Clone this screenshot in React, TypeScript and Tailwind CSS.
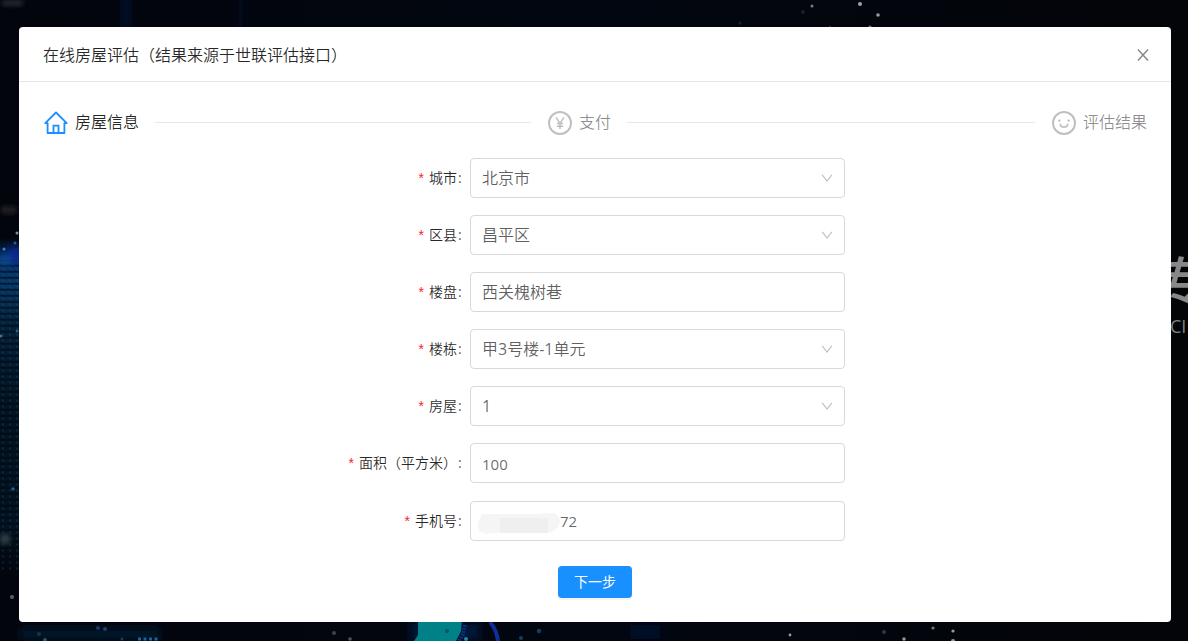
import React from 'react';

type Field = {
  label: string;
  value: string;
  select?: boolean;
  masked?: boolean;
};

const fields: Field[] = [
  { label: '城市', value: '北京市', select: true },
  { label: '区县', value: '昌平区', select: true },
  { label: '楼盘', value: '西关槐树巷' },
  { label: '楼栋', value: '甲3号楼-1单元', select: true },
  { label: '房屋', value: '1', select: true },
  { label: '面积（平方米）', value: '100' },
  { label: '手机号', value: '72', masked: true },
];

const stars: [number, number, number, string][] = [
  [812, 6, 1.5, '#777b80'],
  [860, 4, 2, '#a0a2a6'],
  [878, 15, 1.8, '#96999d'],
  [830, 28, 1.6, '#999'],
  [870, 27, 1.6, '#777'],
  [803, 12, 2, '#15212b'],
  [740, 23, 1.5, '#18222e'],
  [790, 635, 1.4, '#999'],
  [884, 632, 2, '#33363a'],
  [904, 639, 1.7, '#999'],
  [933, 628, 1.6, '#777'],
  [953, 631, 1.6, '#999'],
  [953, 641, 2, '#999'],
  [334, 633, 2, '#3d444c'],
  [350, 639, 1.8, '#4c5359'],
  [521, 638, 2, '#0e4459'],
  [539, 631, 2.2, '#12405e'],
  [17, 233, 1.5, '#7190a8'],
  [15, 243, 1.5, '#355a91'],
  [4, 249, 1.5, '#4c80ae'],
  [17, 331, 1.5, '#25618d'],
  [1, 336, 1.5, '#4c6f8c'],
  [13, 489, 1.8, '#15648a'],
  [12, 597, 2, '#50636b'],
  [45, 640, 2, '#2f5265'],
  [39, 634, 2, '#1c3343'],
  [98, 628, 2, '#17386d'],
  [105, 629, 2, '#26415e'],
  [122, 639, 1.5, '#1b4156'],
];

function Backdrop() {
  return (
    <svg className="absolute inset-0" width="1188" height="641" aria-hidden="true">
      <defs>
        <linearGradient id="sky" x1="0" x2="1" y1="0" y2="0">
          <stop offset="0" stopColor="#02050c" />
          <stop offset="0.5" stopColor="#020610" />
          <stop offset="1" stopColor="#030508" />
        </linearGradient>
        <linearGradient id="glow" x1="0" x2="0" y1="0" y2="1">
          <stop offset="0" stopColor="#02050c" />
          <stop offset="0.06" stopColor="#06326b" />
          <stop offset="0.13" stopColor="#063969" />
          <stop offset="0.25" stopColor="#03223c" />
          <stop offset="0.5" stopColor="#021423" />
          <stop offset="0.85" stopColor="#021221" />
          <stop offset="1" stopColor="#02050c" />
        </linearGradient>
        <pattern id="scan" width="7" height="6" patternUnits="userSpaceOnUse">
          <path d="M0 1.5 L7 2" stroke="#01060d" strokeWidth="2" opacity="0.6" />
          <circle cx="3" cy="4.5" r="1" fill="#155079" opacity="0.4" />
        </pattern>
        <filter id="soft" x="-50%" y="-50%" width="200%" height="200%">
          <feGaussianBlur stdDeviation="0.7" />
        </filter>
        <filter id="blot" x="-50%" y="-100%" width="200%" height="300%">
          <feGaussianBlur stdDeviation="2" />
        </filter>
        <filter id="wide" filterUnits="userSpaceOnUse" x="-40" y="-40" width="1260" height="720">
          <feGaussianBlur stdDeviation="4" />
        </filter>
      </defs>
      <rect width="1188" height="641" fill="url(#sky)" />
      <rect y="238" width="19" height="340" fill="url(#glow)" />
      <rect y="260" width="19" height="310" fill="url(#scan)" />
      <circle cx="15" cy="255" r="8" fill="#0a2897" filter="url(#wide)" />
      <circle cx="5" cy="260" r="6" fill="#0b56a3" filter="url(#wide)" opacity="0.8" />
      <g filter="url(#wide)">
        <rect x="124" y="-5" width="4" height="34" fill="#0b1c48" />
        <rect x="239" y="-5" width="3" height="34" fill="#071531" />
        <rect x="20" y="628" width="140" height="12" fill="#03162a" />
        <rect x="630" y="625" width="30" height="14" fill="#020c2c" />
        <rect x="410" y="622" width="70" height="19" fill="#041537" />
      </g>
      <rect x="2" y="0" width="21" height="6" fill="#24272d" filter="url(#blot)" />
      <rect x="0" y="534" width="10" height="10" fill="#2c3a42" filter="url(#blot)" />
      <rect x="1" y="206" width="15" height="8" fill="#1a1c22" filter="url(#blot)" />
      <g filter="url(#soft)">
        <path d="M418 620 L462 620 L461 631 L456 641 L414 641 L418 635 Z" fill="#048087" />
        <path d="M465 625 L463 634 L459 641" stroke="#0b2f75" strokeWidth="4" strokeDasharray="2 1" fill="none" />
        <path d="M490 622 Q497 630 498 642" stroke="#102f9b" strokeWidth="4" fill="none" />
        <path d="M138 639 H158" stroke="#1c61a5" strokeWidth="3" strokeDasharray="3 2.5" />
        <circle cx="447" cy="631" r="2" fill="#07516a" />
        <circle cx="466" cy="639" r="2" fill="#2487a5" />
        {stars.map(([cx, cy, r, fill], i) => (
          <circle key={i} cx={cx} cy={cy} r={r} fill={fill} />
        ))}
      </g>
    </svg>
  );
}

function HomeIcon() {
  return (
    <svg className="mt-0.5 size-6 shrink-0" viewBox="0 0 24 24" fill="none" stroke="#1890ff" strokeWidth="1.8">
      <path d="M3.6 12.2H1.3L12 1.5L22.7 12.2H20.4V22H3.6Z" strokeLinejoin="round" />
      <path d="M9.5 22V14.6H14.5V22" />
    </svg>
  );
}

function PayIcon() {
  return (
    <svg className="mt-0.5 size-6 shrink-0" viewBox="0 0 24 24" fill="none" stroke="#bfbfbf">
      <circle cx="12" cy="12" r="11" strokeWidth="2" />
      <path d="M8.1 6.3L12 12.3L15.9 6.3M12 12.3V18M8.9 12.6H15.1M8.9 15.2H15.1" strokeWidth="1.5" />
    </svg>
  );
}

function SmileIcon() {
  return (
    <svg className="mt-0.5 size-6 shrink-0" viewBox="0 0 24 24" fill="none" stroke="#bfbfbf">
      <circle cx="12" cy="12" r="11" strokeWidth="2" />
      <path d="M8.2 12.6C8.4 17.2 15.6 17.2 15.8 12.6" strokeWidth="1.6" />
      <circle cx="7.3" cy="9.6" r="1.2" fill="#bfbfbf" stroke="none" />
      <circle cx="16.7" cy="9.6" r="1.2" fill="#bfbfbf" stroke="none" />
    </svg>
  );
}

function DownIcon() {
  return (
    <svg className="h-3 w-3 shrink-0" viewBox="0 0 12 12" fill="none" stroke="#bfbfbf" strokeWidth="1.1">
      <path d="M1.2 2.8L6 9L10.8 2.8" />
    </svg>
  );
}

function Value({ text }: { text: string }) {
  return (
    <span>
      {text.split(/([-\d]+)/).map((part, i) =>
        i % 2 ? (
          <span key={i} className="font-normal text-black/60">{part}</span>
        ) : (
          part
        ),
      )}
    </span>
  );
}

function FieldRow({ field }: { field: Field }) {
  return (
    <div className="flex h-10 items-center">
      <div className="flex w-[443px] shrink-0 items-center justify-end text-sm font-[350] text-black/85">
        <span className="mr-[5px] font-['Liberation_Sans'] font-normal text-[#f5222d]">*</span>
        <span>{field.label}</span>
        <span className="w-[5px] pl-px font-['Open_Sans'] font-normal text-black/70">:</span>
      </div>
      <div className="ml-2 flex h-10 w-[375px] items-center justify-between rounded border border-[#d9d9d9] pr-[11px] pl-[11px] text-base font-[350] text-black/65">
        {field.masked ? (
          <span className="flex items-center text-[15px]">
            <svg className="-ml-1 mt-[5px] h-[22px] w-[82px]" viewBox="0 0 82 22">
              <path d="M4 2H60L68 1H76Q82 4 82 11Q78 20 70 21H14L8 22L1 19Q-1 14 1 8Z" fill="#f5f5f5" />
              <path d="M22 6H70V21H22Z" fill="#efefef" />
            </svg>
            <span className="pt-px"><Value text={field.value} /></span>
          </span>
        ) : (
          <span className={field.value === '100' ? 'pt-0.5 text-[15px]' : ''}>
            <Value text={field.value} />
          </span>
        )}
        {field.select && <DownIcon />}
      </div>
    </div>
  );
}

export default function App() {
  return (
    <div className="relative h-[641px] w-[1188px] overflow-hidden bg-[#02050c] px-[19px] pt-[27px] font-['Open_Sans','Noto_Sans_CJK_SC',sans-serif]">
      <Backdrop />
      <span className="absolute top-[244px] left-[1157px] font-['Noto_Sans_CJK_SC',sans-serif] text-[53px] leading-[70px] font-medium text-[#888]">专</span>
      <span className="absolute top-[314px] left-[1170px] text-[18px] leading-6 text-[#808080]">CI</span>
      <main className="relative h-[595px] w-[1152px] rounded bg-white">
        <header className="flex h-[55px] items-center justify-between border-b border-[#e8e8e8] pr-[22px] pl-6">
          <h1 className="font-['Noto_Sans_CJK_SC',sans-serif] text-base font-[350] text-black/85">
            在线房屋评估（结果来源于世联评估接口）
          </h1>
          <button aria-label="关闭">
            <svg className="mt-px size-3" viewBox="0 0 12 12" fill="none" stroke="#858585" strokeWidth="1.4">
              <path d="M1 0.5L11 11.5M11 0.5L1 11.5" />
            </svg>
          </button>
        </header>
        <div className="flex h-20 items-center pr-6 pl-[25px] font-['Noto_Sans_CJK_SC',sans-serif] text-base font-[350]">
          <HomeIcon />
          <span className="mb-0.5 ml-[7px] text-black/85">房屋信息</span>
          <i className="ml-4 h-px w-[376px] bg-[#e8e8e8]" />
          <span className="ml-[17px] flex items-center text-black/45">
            <PayIcon />
            <span className="mb-0.5 ml-[7px]">支付</span>
          </span>
          <i className="ml-4 h-px w-[408px] bg-[#e8e8e8]" />
          <span className="ml-[17px] flex items-center text-black/45">
            <SmileIcon />
            <span className="mb-0.5 ml-[7px]">评估结果</span>
          </span>
        </div>
        <form className="-mt-1 flex flex-col gap-[17.1px]">
          {fields.map((field) => (
            <FieldRow key={field.label} field={field} />
          ))}
          <button
            type="button"
            className="mt-2 ml-[539px] h-8 w-[74px] rounded bg-[#1890ff] text-sm text-white shadow-[0_2px_0_rgba(0,0,0,0.045)]"
          >
            下一步
          </button>
        </form>
      </main>
    </div>
  );
}
